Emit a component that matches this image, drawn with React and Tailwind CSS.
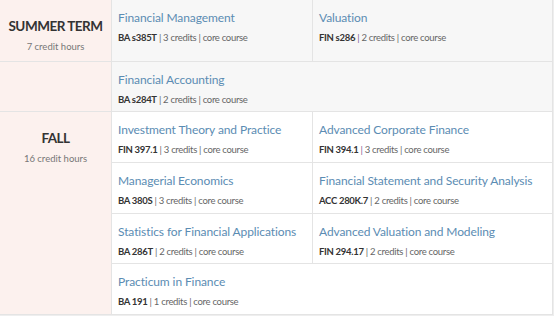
const font = { fontFamily: "Lato, 'Open Sans', sans-serif" };

function Course({ title, code, credits, purple }) {
  return (
    <div className="pl-[6px] pt-[9px]">
      <p className="text-[12px] leading-[18px] tracking-[-0.1px] text-[#5b8cb3]">{title}</p>
      <p className="mt-[4px] text-[9.5px] leading-[14px] tracking-[-0.3px] text-[#666]">
        <span className="font-bold text-[#333]">{code}</span>
        <span className={purple ? "text-[#7d5a92]" : "text-[#666]"}> | </span>
        {credits} credits | core course
      </p>
    </div>
  );
}

function TermLabel({ name, hours }) {
  return (
    <div className="pt-[16px] text-center">
      <p className="text-[13.5px] font-bold leading-[20px] tracking-[-0.5px] text-[#333]">{name}</p>
      <p className="mt-[4px] text-[9.5px] leading-[14px] text-[#777]">{hours} credit hours</p>
    </div>
  );
}

const fall = [
  [
    { title: "Investment Theory and Practice", code: "FIN 397.1", credits: 3 },
    { title: "Advanced Corporate Finance", code: "FIN 394.1 ", credits: 3, purple: true },
  ],
  [
    { title: "Managerial Economics", code: "BA 380S", credits: 3 },
    { title: "Financial Statement and Security Analysis", code: "ACC 280K.7", credits: 2 },
  ],
  [
    { title: "Statistics for Financial Applications", code: "BA 286T", credits: 2 },
    { title: "Advanced Valuation and Modeling", code: "FIN 294.17", credits: 2 },
  ],
  [{ title: "Practicum in Finance", code: "BA 191", credits: 1 }],
];

const heights = ["h-[51px]", "h-[51px]", "h-[50px]", "h-[50px]"];

export default function App() {
  return (
    <div className="h-[316px] w-[554px] overflow-hidden bg-[#eeeeee]" style={font}>
      <div className="w-[553px] border-r border-b border-[#e4e4e4] bg-white">
        {/* summer term */}
        <div className="flex h-[62px] border-b border-[#e4e4e4]">
          <div className="w-[112px] shrink-0 border-r border-[#e4e4e4] bg-[#fcf1ee]">
            <TermLabel name="SUMMER TERM" hours={7} />
          </div>
          <div className="grid flex-1 grid-cols-[201px_1fr] bg-[#f7f7f7]">
            <div className="border-r border-[#e4e4e4]">
              <Course title="Financial Management" code="BA s385T" credits={3} />
            </div>
            <Course title="Valuation" code="FIN s286" credits={2} purple />
          </div>
        </div>
        <div className="flex h-[50px] border-b border-[#e4e4e4]">
          <div className="w-[112px] shrink-0 border-r border-[#e4e4e4] bg-[#fcf1ee]" />
          <div className="flex-1 bg-[#f7f7f7]">
            <Course title="Financial Accounting" code="BA s284T" credits={2} />
          </div>
        </div>

        {/* fall */}
        <div className="flex">
          <div className="w-[112px] shrink-0 border-r border-[#e4e4e4] bg-[#fcf1ee]">
            <TermLabel name="FALL" hours={16} />
          </div>
          <div className="flex-1">
            {fall.map((row, i) => (
              <div
                key={i}
                className={`grid grid-cols-[201px_1fr] ${heights[i]} ${i < fall.length - 1 ? "border-b border-[#e4e4e4]" : ""}`}
              >
                {row.map((c, j) => (
                  <div key={j} className={j === 0 && row.length > 1 ? "border-r border-[#e4e4e4]" : ""}>
                    <Course {...c} />
                  </div>
                ))}
              </div>
            ))}
          </div>
        </div>
      </div>
    </div>
  );
}
